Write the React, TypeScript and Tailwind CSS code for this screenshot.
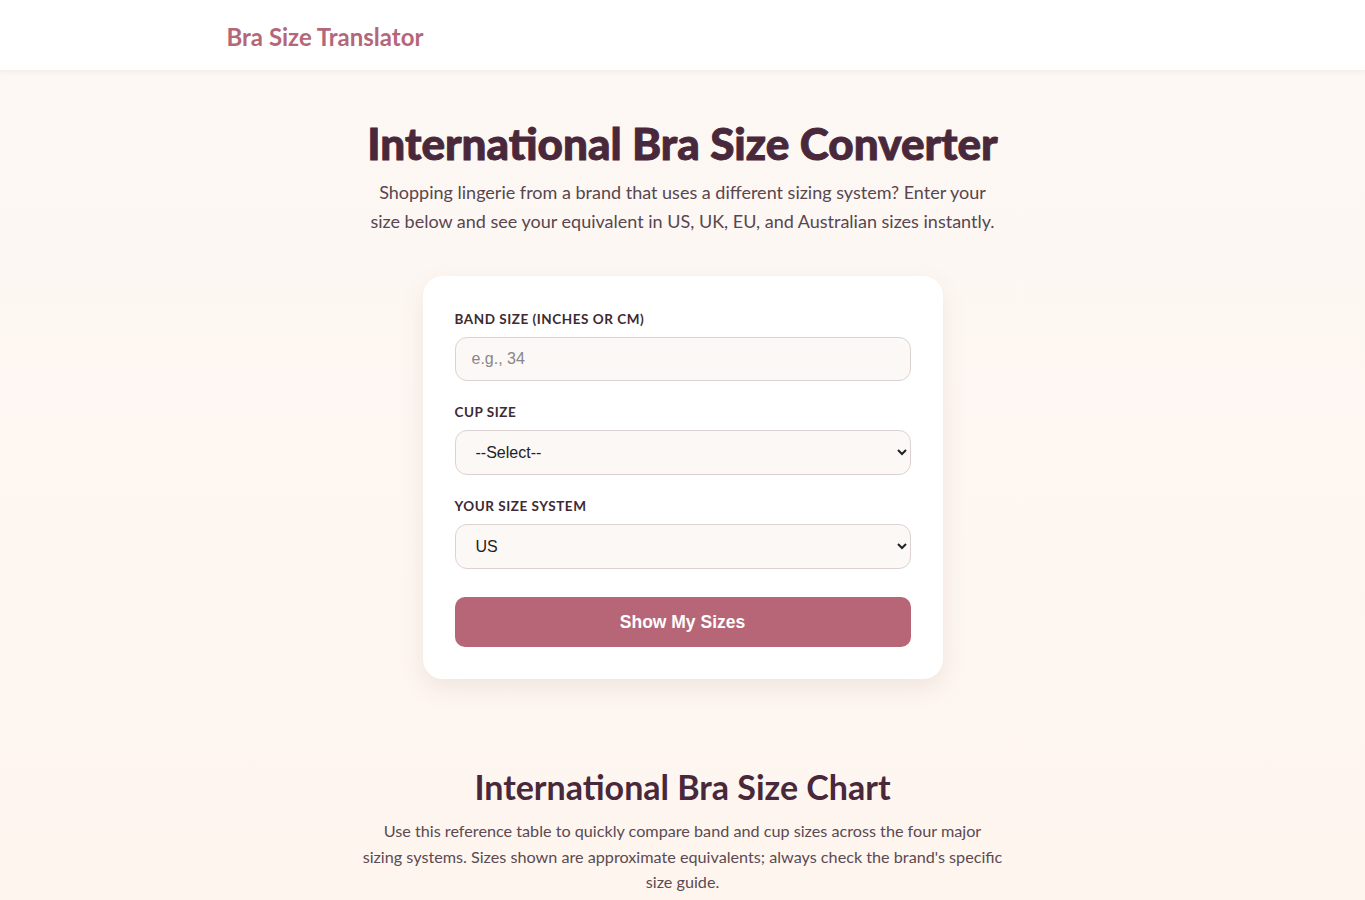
import React, { useState } from "react";

const sans = { fontFamily: 'Lato, "Open Sans", sans-serif' };
const arial = { fontFamily: '"Liberation Sans", Arial, sans-serif' };

const Field: React.FC<{ label: string; children: React.ReactNode }> = ({ label, children }) => (
  <div className="flex flex-col">
    <label className="mb-[7px] text-[13.5px] font-bold uppercase tracking-[0.04em] text-[#3d2a33] leading-[22px]">
      {label}
    </label>
    {children}
  </div>
);

const inputCls =
  "w-full rounded-xl border border-[#dcd2d2] bg-[#fcf8f5] px-4 text-[16px] text-[#222] placeholder:text-[#8a8588] outline-none";

export default function App() {
  const [band, setBand] = useState("");
  const [cup, setCup] = useState("");
  const [system, setSystem] = useState("US");

  return (
    <div className="min-h-screen bg-gradient-to-b from-[#fdf8f5] to-[#fef5ee]" style={sans}>
      {/* header */}
      <header className="h-[70px] bg-white shadow-[0_2px_6px_rgba(0,0,0,0.05)]">
        <div className="mx-auto flex h-full max-w-[960px] items-center px-6 pt-1">
          <span className="text-[24px] font-bold text-[#b5677a]">Bra Size Translator</span>
        </div>
      </header>

      <main className="mx-auto flex max-w-[960px] flex-col items-center px-6 pt-[47px]">
        <h1 className="text-[44px] font-black leading-[52px] text-[#48283a] [-webkit-text-stroke:0.9px_#48283a]">
          International Bra Size Converter
        </h1>
        <p className="mt-[9px] max-w-[640px] text-center text-[18px] leading-[29px] text-[#574650]">
          Shopping lingerie from a brand that uses a different sizing system? Enter your size below and see your
          equivalent in US, UK, EU, and Australian sizes instantly.
        </p>

        <form
          className="mt-[40px] flex w-[520px] flex-col rounded-[20px] bg-white p-8 shadow-[0_8px_24px_rgba(120,80,60,0.1)]"
          onSubmit={(e) => e.preventDefault()}
        >
          <Field label="Band Size (inches or cm)">
            <input
              className={inputCls + " h-[44px]"}
              style={arial}
              placeholder="e.g., 34"
              value={band}
              onChange={(e) => setBand(e.target.value)}
            />
          </Field>
          <div className="h-[20px]" />
          <Field label="Cup Size">
            <select
              className={inputCls + " h-[45px]"}
              style={{ ...arial, appearance: "auto" }}
              value={cup}
              onChange={(e) => setCup(e.target.value)}
            >
              <option value="">--Select--</option>
              {["AA", "A", "B", "C", "D", "DD", "E", "F", "G", "H"].map((c) => (
                <option key={c}>{c}</option>
              ))}
            </select>
          </Field>
          <div className="h-[20px]" />
          <Field label="Your Size System">
            <select
              className={inputCls + " h-[45px]"}
              style={{ ...arial, appearance: "auto" }}
              value={system}
              onChange={(e) => setSystem(e.target.value)}
            >
              {["US", "UK", "EU", "AU"].map((s) => (
                <option key={s}>{s}</option>
              ))}
            </select>
          </Field>
          <button
            type="submit"
            className="mt-[28px] h-[50px] w-full rounded-[10px] bg-[#b66677] text-[17.5px] font-bold text-white"
            style={arial}
          >
            Show My Sizes
          </button>
        </form>

        <h2 className="mt-[88px] text-[34px] font-bold leading-[40px] text-[#48283a]">International Bra Size Chart</h2>
        <p className="mt-[11px] max-w-[650px] text-center text-[16.2px] leading-[25.5px] text-[#5b4a52]">
          Use this reference table to quickly compare band and cup sizes across the four major
          <br />
          sizing systems. Sizes shown are approximate equivalents; always check the brand's specific size guide.
        </p>
        <div className="h-[60px]" />
      </main>
    </div>
  );
}
